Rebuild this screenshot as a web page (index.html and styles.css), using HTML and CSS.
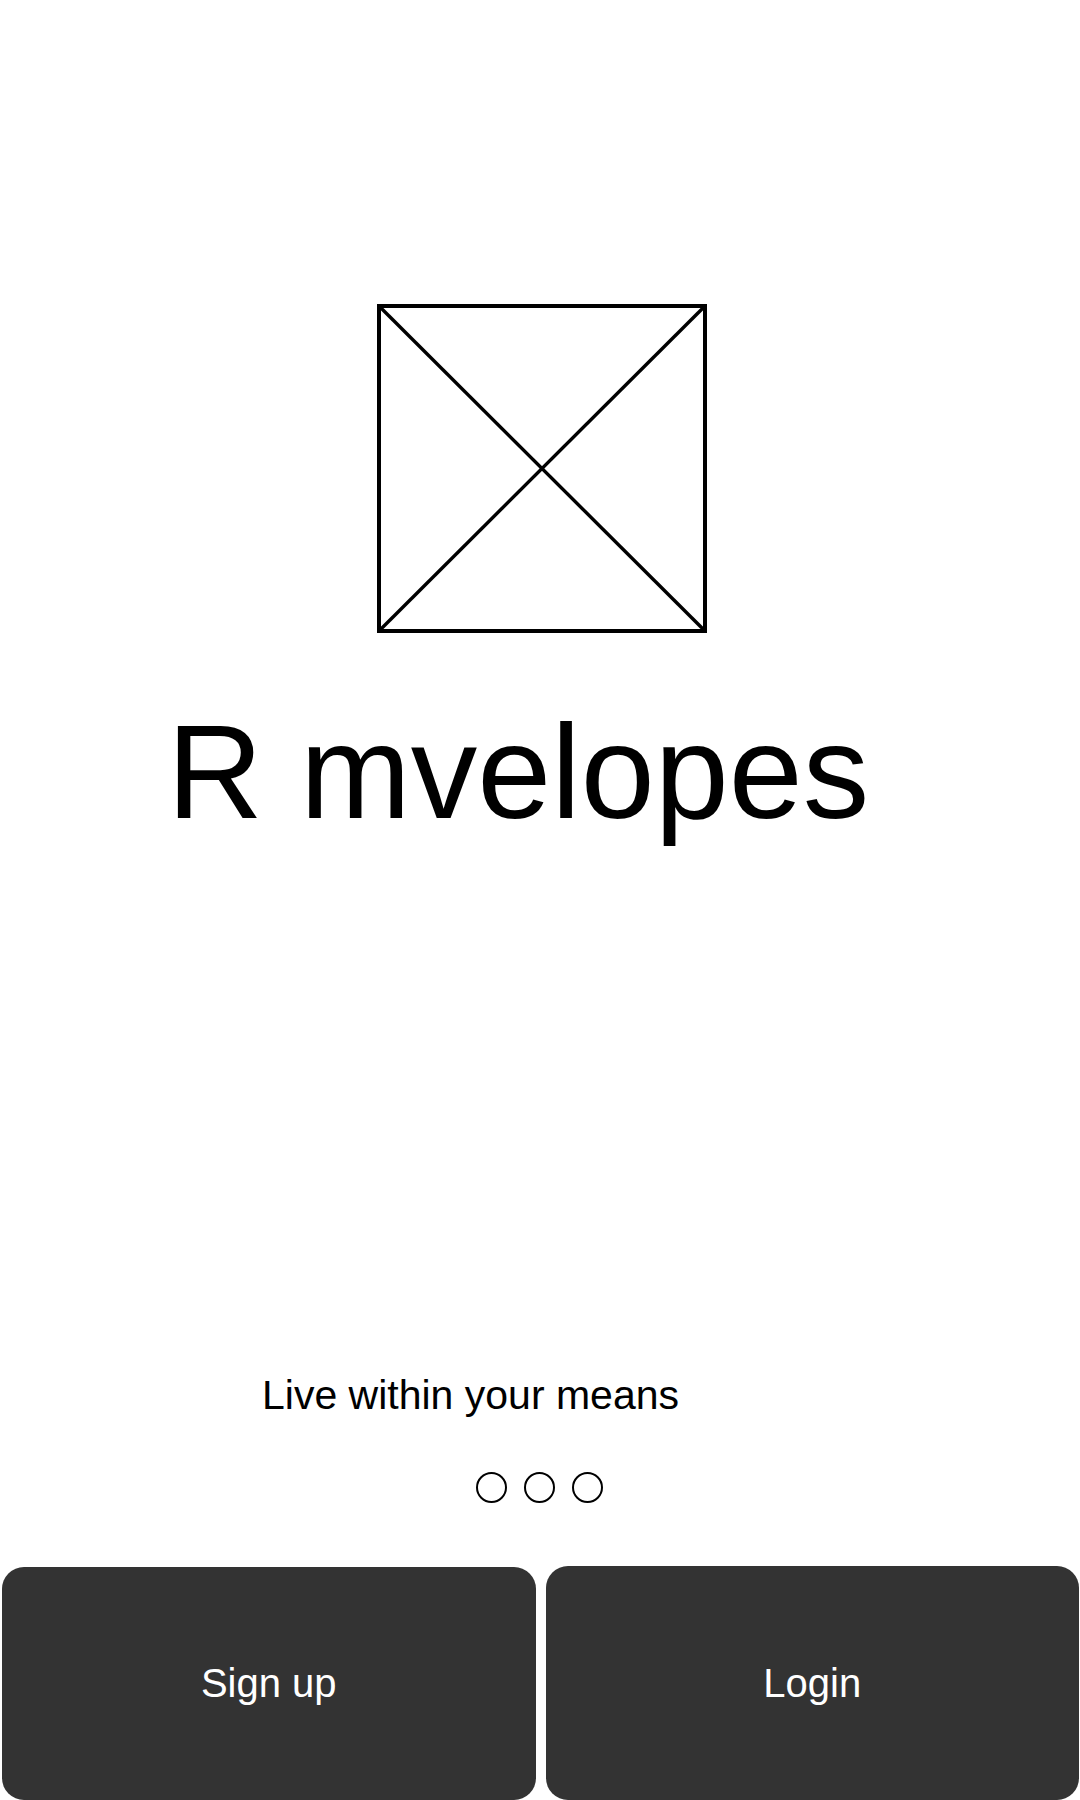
FILE: index.html
```html
<!DOCTYPE html>
<html lang="en">
<head>
<meta charset="utf-8">
<title>R mvelopes</title>
<link rel="stylesheet" href="styles.css">
</head>
<body>
<main class="screen">
  <div class="hero">
    <svg class="placeholder" viewBox="0 0 330 329" width="330" height="329" aria-hidden="true">
      <rect x="2" y="2" width="326" height="325" fill="none" stroke="#000" stroke-width="4"/>
      <line x1="3" y1="3" x2="327" y2="326" stroke="#000" stroke-width="3.4"/>
      <line x1="327" y1="3" x2="3" y2="326" stroke="#000" stroke-width="3.4"/>
    </svg>
  </div>
  <h1 class="title">R mvelopes</h1>
  <p class="tagline">Live within your means</p>
  <div class="dots">
    <span class="dot"></span>
    <span class="dot"></span>
    <span class="dot"></span>
  </div>
  <div class="actions">
    <button class="btn btn-left" type="button">Sign up</button>
    <button class="btn btn-right" type="button">Login</button>
  </div>
</main>
</body>
</html>
```

FILE: styles.css
```css
html, body {
  margin: 0;
  padding: 0;
  background: #ffffff;
}

body {
  font-family: "Liberation Sans", Arial, sans-serif;
  color: #000000;
}

.screen {
  width: 1080px;
  height: 1800px;
  display: flex;
  flex-direction: column;
  box-sizing: border-box;
  padding-top: 304px;
}

.hero {
  padding-left: 377px;
  height: 329px;
}

.placeholder {
  display: block;
}

.title {
  margin: 72px 0 0 0;
  padding-left: 167px;
  font-size: 133px;
  font-weight: 400;
  line-height: 134px;
  height: 134px;
}

.tagline {
  margin: 536px 0 0 0;
  padding-left: 262px;
  font-size: 41px;
  line-height: 40px;
  height: 40px;
}

.dots {
  margin-top: 57px;
  display: flex;
  justify-content: center;
  gap: 17px;
  height: 31px;
  padding-right: 2px;
}

.dot {
  width: 31px;
  height: 31px;
  box-sizing: border-box;
  border: 2.5px solid #000;
  border-radius: 50%;
}

.actions {
  margin-top: 64px;
  display: flex;
  gap: 10px;
  padding: 0 1px 0 2px;
  height: 233px;
}

.btn {
  flex: 1;
  height: 233px;
  border: none;
  border-radius: 22px;
  background: #333333;
  color: #ffffff;
  font-family: "Liberation Sans", Arial, sans-serif;
  font-size: 40px;
  padding: 0;
  margin: 0;
}

.btn-right {
  margin-top: -1px;
  height: 234px;
}
```
